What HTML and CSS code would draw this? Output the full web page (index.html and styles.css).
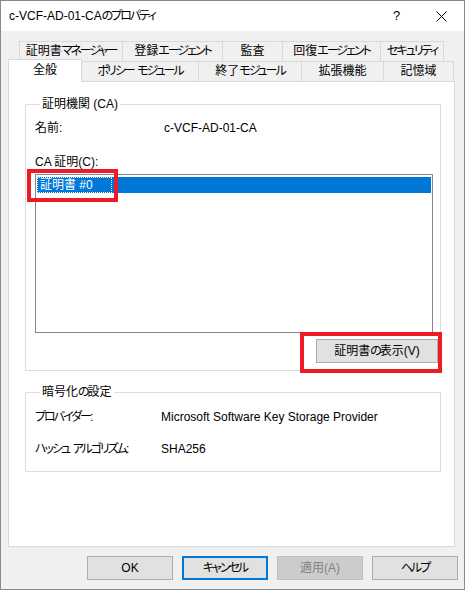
FILE: index.html
```html
<!DOCTYPE html>
<html lang="ja">
<head>
<meta charset="utf-8">
<title>c-VCF-AD-01-CAのプロパティ</title>
<link rel="stylesheet" href="styles.css">
</head>
<body>
<div class="window">
  <div class="titlebar">
    <div class="title">c-VCF-AD-01-CA<span class="k">のプロパティ</span></div>
    <div class="tb-btn help">?</div>
    <div class="tb-btn close">
      <svg width="11" height="11" viewBox="0 0 11 11"><path d="M0.5 0.5 L10.5 10.5 M10.5 0.5 L0.5 10.5" stroke="#000" stroke-width="1" fill="none"/></svg>
    </div>
  </div>
  <div class="content">
    <div class="tabs">
      <div class="tab-row back">
        <div class="tab w1">証明書<span class="k">マネージャー</span></div>
        <div class="tab w2">登録<span class="k">エージェント</span></div>
        <div class="tab w3">監査</div>
        <div class="tab w4">回復<span class="k">エージェント</span></div>
        <div class="tab w5 last"><span class="k">セキュリティ</span></div>
      </div>
      <div class="tab-row front">
        <div class="tab active f1">全般</div>
        <div class="tab f2"><span class="k">ポリシー</span> <span class="k">モジュール</span></div>
        <div class="tab f3">終了<span class="k">モジュール</span></div>
        <div class="tab f4">拡張機能</div>
        <div class="tab f5 last">記憶域</div>
      </div>
    </div>
    <div class="panel">
      <fieldset class="group g1">
        <legend>証明機関 (CA)</legend>
        <div class="row name-row"><span class="lbl">名前:</span><span class="val">c-VCF-AD-01-CA</span></div>
        <div class="row cert-label">CA 証明(C):</div>
        <div class="listbox">
          <div class="item selected"><span class="focus">証明書 #0</span></div>
        </div>
        <div class="btn-line"><div class="btn view">証明書<span class="k">の</span>表示(V)</div></div>
      </fieldset>
      <fieldset class="group g2">
        <legend>暗号化<span class="k">の</span>設定</legend>
        <div class="row kv"><span class="lbl"><span class="k">プロバイダー</span>:</span><span class="val">Microsoft Software Key Storage Provider</span></div>
        <div class="row kv second"><span class="lbl"><span class="k">ハッシュ</span> <span class="k">アルゴリズム</span>:</span><span class="val">SHA256</span></div>
      </fieldset>
    </div>
    <div class="footer">
      <div class="btn">OK</div>
      <div class="btn focused"><span class="k">キャンセル</span></div>
      <div class="btn disabled">適用(A)</div>
      <div class="btn"><span class="k">ヘルプ</span></div>
    </div>
  </div>
  <div class="mark mark1"></div>
  <div class="mark mark2"></div>
</div>
</body>
</html>
```
FILE: styles.css
```css
html, body {
  margin: 0;
  padding: 0;
  background: #f0f0f0;
}
body {
  font-family: "Liberation Sans", "Noto Sans CJK JP", sans-serif;
  font-size: 12px;
  line-height: 16px;
  color: #000;
  font-feature-settings: "palt";
}
.k {
  letter-spacing: -2px;
}
.window {
  position: relative;
  width: 465px;
  height: 590px;
  box-sizing: border-box;
  border: 1px solid #8a8a8a;
  background: #f0f0f0;
  display: flex;
  flex-direction: column;
}
.titlebar {
  height: 30px;
  background: #fff;
  display: flex;
  align-items: center;
}
.title {
  flex: 1;
  padding-left: 8px;
}
.tb-btn {
  width: 46px;
  height: 30px;
  display: flex;
  align-items: center;
  justify-content: center;
}
.tb-btn.help {
  font-size: 13px;
  padding-left: 3px;
  box-sizing: border-box;
}
.content {
  padding: 10px 0 0 7px;
  display: flex;
  flex-direction: column;
}
.tabs {
  display: flex;
  flex-direction: column;
}
.tab-row {
  display: flex;
  height: 20px;
}
.tab-row.back {
  margin-left: 11px;
}
.tab {
  box-sizing: border-box;
  height: 20px;
  border-top: 1px solid #d9d9d9;
  border-left: 1px solid #d9d9d9;
  background: #f0f0f0;
  text-align: center;
  line-height: 19px;
  white-space: nowrap;
}
.tab.last {
  border-right: 1px solid #d9d9d9;
}
.w1 { width: 103px; }
.w2 { width: 100px; }
.w3 { width: 60px; }
.w4 { width: 98px; }
.w5 { width: 64px; }
.f1 { width: 74px; }
.f2 { width: 117px; }
.f3 { width: 103px; }
.f4 { width: 82px; }
.f5 { width: 71px; }
.tab.active {
  background: #fff;
  height: 23px;
  margin-top: -2px;
  border-right: 1px solid #d9d9d9;
  margin-right: -1px;
  position: relative;
  z-index: 2;
  line-height: 20px;
}
.panel {
  width: 447px;
  height: 466px;
  box-sizing: border-box;
  border: 1px solid #d9d9d9;
  background: #fff;
  padding: 14px 0 0 16px;
}
.group {
  width: 416px;
  box-sizing: border-box;
  margin: 0;
  border: 1px solid #dcdcdc;
  padding: 8px 0 7px 9px;
}
.group legend {
  padding: 0 2px;
  margin-left: 5px;
  line-height: 16px;
}
.row {
  height: 16px;
  display: flex;
  white-space: nowrap;
}
.g1 .lbl { width: 129px; }
.g2 .lbl { width: 126px; }
.cert-label {
  margin-top: 18px;
}
.listbox {
  margin-top: 4px;
  width: 398px;
  height: 159px;
  box-sizing: border-box;
  border: 1px solid #828790;
  padding: 2px 1px 0 1px;
}
.item.selected {
  height: 16px;
  background: #0078d7;
  color: #fff;
  display: flex;
}
.item .focus {
  box-sizing: border-box;
  width: 75px;
  height: 16px;
  border: 1px dotted #f3f3f3;
  padding-left: 2px;
  line-height: 14px;
}
.btn-line {
  display: flex;
  justify-content: flex-end;
  margin-top: 6px;
  padding-right: 2px;
}
.btn {
  box-sizing: border-box;
  width: 86px;
  height: 24px;
  border: 1px solid #adadad;
  background: #e1e1e1;
  display: flex;
  align-items: center;
  justify-content: center;
  white-space: pre;
}
.btn.view {
  width: 122px;
}
.btn.focused {
  border: 2px solid #0078d7;
}
.btn.disabled {
  background: #cccccc;
  border-color: #bfbfbf;
  color: #838383;
}
.g2 {
  margin-top: 13px;
  padding-top: 9px;
  padding-bottom: 14px;
}
.kv.second {
  margin-top: 16px;
}
.lbl {
  white-space: pre;
}
.footer {
  display: flex;
  justify-content: flex-end;
  gap: 9px;
  margin-top: 9px;
  padding-right: 7px;
  width: 457px;
  box-sizing: border-box;
}
.mark {
  position: absolute;
  border: 4px solid #ed1c24;
  box-sizing: border-box;
}
.mark1 {
  left: 26px;
  top: 168px;
  width: 91px;
  height: 33px;
}
.mark2 {
  left: 299px;
  top: 331px;
  width: 142px;
  height: 41px;
}
```
